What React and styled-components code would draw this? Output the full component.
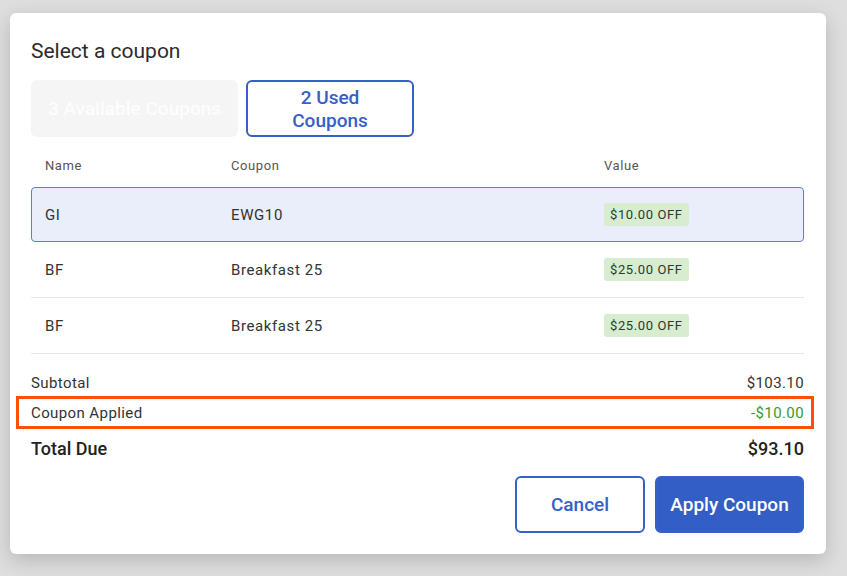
import styled, { createGlobalStyle } from 'styled-components';

const Global = createGlobalStyle`
  html, body { margin: 0; height: 100%; }
  body { background: #dedede; font-family: Roboto, "Liberation Sans", sans-serif; }
`;

const Page = styled.div`
  padding: 13px 21px 0 10px;
  height: 576px;
  box-sizing: border-box;
`;

const Modal = styled.div`
  width: 816px;
  height: 541px;
  box-sizing: border-box;
  background: #fff;
  border-radius: 6px;
  box-shadow: 0 6px 20px rgba(0, 0, 0, 0.18);
  padding: 24px 22px 0 21px;
  display: flex;
  flex-direction: column;
`;

const Title = styled.h2`
  margin: 0;
  font-size: 21px;
  font-weight: 400;
  color: #2b2b2b;
  line-height: 28px;
`;

const Tabs = styled.div`
  display: flex;
  gap: 8px;
  margin-top: 15px;
`;

const Tab = styled.button`
  height: 57px;
  box-sizing: border-box;
  padding: 0 14px;
  font: 500 19px Roboto, sans-serif;
  border-radius: 6px;
  background: ${p => (p.$active ? '#fff' : '#f5f5f5')};
  border: ${p => (p.$active ? '2px solid #3460c8' : '2px solid #f5f5f5')};
  color: ${p => (p.$active ? '#3460c8' : '#fdfdfd')};
  width: ${p => p.$w}px;
`;

const Grid = styled.div`
  display: grid;
  grid-template-columns: 186px 373px 1fr;
  align-items: center;
  padding-left: 14px;
`;

const Head = styled(Grid)`
  height: 50px;
  padding-top: 6px;
  box-sizing: border-box;
  font-size: 13px;
  letter-spacing: 0.6px;
  color: #555;
`;

const Row = styled(Grid)`
  height: 56px;
  box-sizing: border-box;
  font-size: 15px;
  letter-spacing: 0.6px;
  color: #333;
  border-bottom: 1px solid #e6e6e6;
  ${p => p.$selected && `
    background: #e9eefa;
    border: 1px solid #5a7fd4;
    border-radius: 4px;
    padding-left: 13px;
    height: 55px;
  `}
`;

const Badge = styled.span`
  justify-self: start;
  background: #d8ecd0;
  color: #2d3a2a;
  font-size: 13px;
  letter-spacing: 0.6px;
  padding: 4px 6px;
  border-radius: 3px;
`;

const Totals = styled.div`
  margin-top: 15px;
  display: flex;
  flex-direction: column;
`;

const Line = styled.div`
  display: flex;
  justify-content: space-between;
  align-items: center;
  font-size: ${p => (p.$big ? '18px' : '15px')};
  font-weight: ${p => (p.$big ? 500 : 400)};
  color: ${p => (p.$big ? '#222' : '#333')};
  letter-spacing: ${p => (p.$big ? '0' : '0.4px')};
  height: ${p => (p.$big ? '38px' : '27px')};
`;

const Highlight = styled.div`
  margin: 0 -10px 0 -15px;
  padding: 0 7px 0 12px;
  border: 3px solid #ff4d0a;
  height: 33px;
  box-sizing: border-box;
  display: flex;
  justify-content: space-between;
  align-items: center;
  font-size: 15px;
  letter-spacing: 0.4px;
  color: #333;
`;

const Green = styled.span`
  color: #3a9a2a;
`;

const Footer = styled.div`
  display: flex;
  justify-content: flex-end;
  gap: 10px;
  margin-top: 9px;
`;

const Button = styled.button`
  height: 57px;
  border-radius: 6px;
  font: 500 19px Roboto, sans-serif;
  width: ${p => p.$w}px;
  background: ${p => (p.$primary ? '#325ec6' : '#fff')};
  color: ${p => (p.$primary ? '#fff' : '#3460c8')};
  border: 2px solid #3460c8;
`;

const rows = [
  { name: 'GI', code: 'EWG10', value: '$10.00 OFF', selected: true },
  { name: 'BF', code: 'Breakfast 25', value: '$25.00 OFF' },
  { name: 'BF', code: 'Breakfast 25', value: '$25.00 OFF' },
];

export default function App() {
  return (
    <Page>
      <Global />
      <Modal>
        <Title>Select a coupon</Title>
        <Tabs>
          <Tab $w={207}>3 Available Coupons</Tab>
          <Tab $active $w={168}>2 Used Coupons</Tab>
        </Tabs>
        <Head>
          <span>Name</span>
          <span>Coupon</span>
          <span>Value</span>
        </Head>
        {rows.map((r, i) => (
          <Row key={i} $selected={r.selected}>
            <span>{r.name}</span>
            <span>{r.code}</span>
            <Badge>{r.value}</Badge>
          </Row>
        ))}
        <Totals>
          <Line>
            <span>Subtotal</span>
            <span>$103.10</span>
          </Line>
          <Highlight>
            <span>Coupon Applied</span>
            <Green>-$10.00</Green>
          </Highlight>
          <Line $big>
            <span>Total Due</span>
            <span>$93.10</span>
          </Line>
        </Totals>
        <Footer>
          <Button $w={130}>Cancel</Button>
          <Button $primary $w={149}>Apply Coupon</Button>
        </Footer>
      </Modal>
    </Page>
  );
}
